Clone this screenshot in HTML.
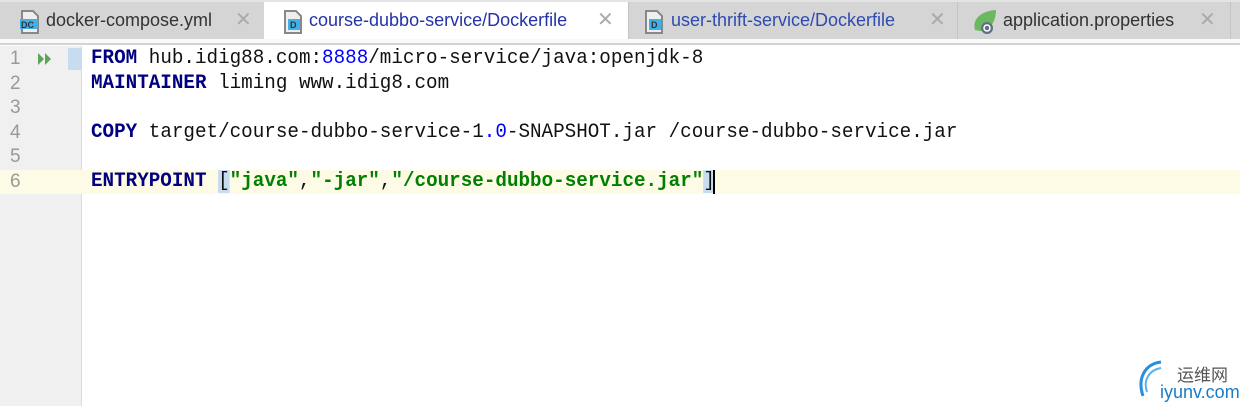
<!DOCTYPE html>
<html><head><meta charset="utf-8"><style>
*{margin:0;padding:0;box-sizing:border-box}
body{width:1240px;height:406px;background:#fff;position:relative;overflow:hidden;font-family:"Liberation Sans",sans-serif}
.bar{position:absolute;left:0;top:0;width:1240px;height:39px;background:#d5d5d5;border-top:2px solid #e4e4e4}
.tab{position:absolute;top:2px;height:37px;font-size:18px;line-height:36px;color:#333;white-space:nowrap}
.tab .x{color:#aaa;font-size:20px;position:absolute;top:0}
.sep{position:absolute;top:2px;width:1px;height:37px;background:#c4c4c4}
.strip{position:absolute;left:0;top:39px;width:1240px;height:6px;background:#fafafa;border-bottom:2px solid #d3d3d3}
.gut{position:absolute;left:0;top:46px;width:82px;height:360px;background:#f0f0f0;border-right:1px solid #dcdcdc}
.ln{position:absolute;left:10px;font:19px "Liberation Sans",sans-serif;color:#999}
.code{position:absolute;left:91px;font:20px "Liberation Mono",monospace;color:#111;white-space:pre;transform:scaleX(0.9625);transform-origin:0 0}
.k{color:#000080;font-weight:bold}
.n{color:#0000ff}
.s{color:#008000;font-weight:bold}
.hl{background:#c8dcf0}
</style></head><body>
<div class="bar"></div>
<div class="tab" style="left:0;width:263px">
<svg style="position:absolute;left:19px;top:8px" width="22" height="24"><path d="M3 1h11l5 5v17H3z" fill="#eee" stroke="#888" stroke-width="2"/><rect x="1" y="9" width="18" height="10" fill="#3fb0e8"/><text x="2" y="18" font-size="9" font-weight="bold" fill="#333" font-family="Liberation Sans">DC</text></svg>
<span style="position:absolute;left:46px">docker-compose.yml</span><span class="x" style="left:235px">✕</span></div>
<div class="tab" style="left:264px;width:364px;background:#fff">
<svg style="position:absolute;left:18px;top:8px" width="22" height="24"><path d="M3 1h11l5 5v17H3z" fill="#eee" stroke="#888" stroke-width="2"/><rect x="6" y="9" width="12" height="11" fill="#3fb0e8"/><text x="8" y="18" font-size="9" font-weight="bold" fill="#333" font-family="Liberation Sans">D</text></svg>
<span style="position:absolute;left:45px;color:#2433a8">course-dubbo-service/Dockerfile</span><span class="x" style="left:333px">✕</span></div>
<div class="sep" style="left:628px"></div>
<div class="tab" style="left:629px;width:328px">
<svg style="position:absolute;left:14px;top:8px" width="22" height="24"><path d="M3 1h11l5 5v17H3z" fill="#eee" stroke="#888" stroke-width="2"/><rect x="6" y="9" width="12" height="11" fill="#3fb0e8"/><text x="8" y="18" font-size="9" font-weight="bold" fill="#333" font-family="Liberation Sans">D</text></svg>
<span style="position:absolute;left:42px;color:#2e4bb0">user-thrift-service/Dockerfile</span><span class="x" style="left:300px">✕</span></div>
<div class="sep" style="left:957px"></div>
<div class="tab" style="left:958px;width:272px">
<svg style="position:absolute;left:14px;top:6px" width="28" height="28"><path d="M3 22C0 12 8 3 24 2 24 14 18 22 8 23z" fill="#6cb860"/><circle cx="15" cy="20" r="6" fill="#607080"/><circle cx="15" cy="20" r="3" fill="none" stroke="#fff" stroke-width="1.5"/></svg>
<span style="position:absolute;left:45px">application.properties</span><span class="x" style="left:241px">✕</span></div>
<div class="sep" style="left:1230px"></div>
<div class="strip"></div>
<div class="gut"></div>
<div style="position:absolute;left:82px;top:170px;width:1158px;height:24px;background:#fdfbe6"></div>
<div style="position:absolute;left:0;top:170px;width:82px;height:24px;background:#fdfbe6"></div>
<div style="position:absolute;left:68px;top:48px;width:14px;height:22px;background:#c8dcf0"></div>
<svg style="position:absolute;left:37px;top:51px" width="16" height="16"><path d="M1 2l6 6-6 6zM8 2l6 6-6 6z" fill="#5aa55a"/></svg>
<div class="ln" style="top:48px">1</div>
<div class="ln" style="top:73px">2</div>
<div class="ln" style="top:97px">3</div>
<div class="ln" style="top:122px">4</div>
<div class="ln" style="top:146px">5</div>
<div class="ln" style="top:171px">6</div>
<div class="code" style="top:47px"><span class="k">FROM</span> hub.idig88.com:<span class="n">8888</span>/micro-service/java:openjdk-8</div>
<div class="code" style="top:72px"><span class="k">MAINTAINER</span> liming www.idig8.com</div>
<div class="code" style="top:121px"><span class="k">COPY</span> target/course-dubbo-service-1<span class="n">.0</span>-SNAPSHOT.jar /course-dubbo-service.jar</div>
<div class="code" style="top:170px"><span class="k">ENTRYPOINT</span> <span class="hl">[</span><span class="s">"java"</span>,<span class="s">"-jar"</span>,<span class="s">"/course-dubbo-service.jar"</span><span class="hl">]</span></div>
<div style="position:absolute;left:713px;top:170px;width:2px;height:24px;background:#000"></div>
<svg style="position:absolute;left:1135px;top:358px" width="30" height="44"><path d="M26 4C10 6 2 20 8 38" fill="none" stroke="#2a8fd8" stroke-width="3"/><path d="M26 10C14 12 8 22 12 34" fill="none" stroke="#5ab0e8" stroke-width="2"/></svg>
<div style="position:absolute;left:1177px;top:361px;font:17px 'Noto Sans CJK SC',sans-serif;color:#555">运维网</div>
<div style="position:absolute;left:1160px;top:382px;font:18px 'Liberation Sans',sans-serif;color:#1a7cc8">iyunv.com</div>
</body></html>
